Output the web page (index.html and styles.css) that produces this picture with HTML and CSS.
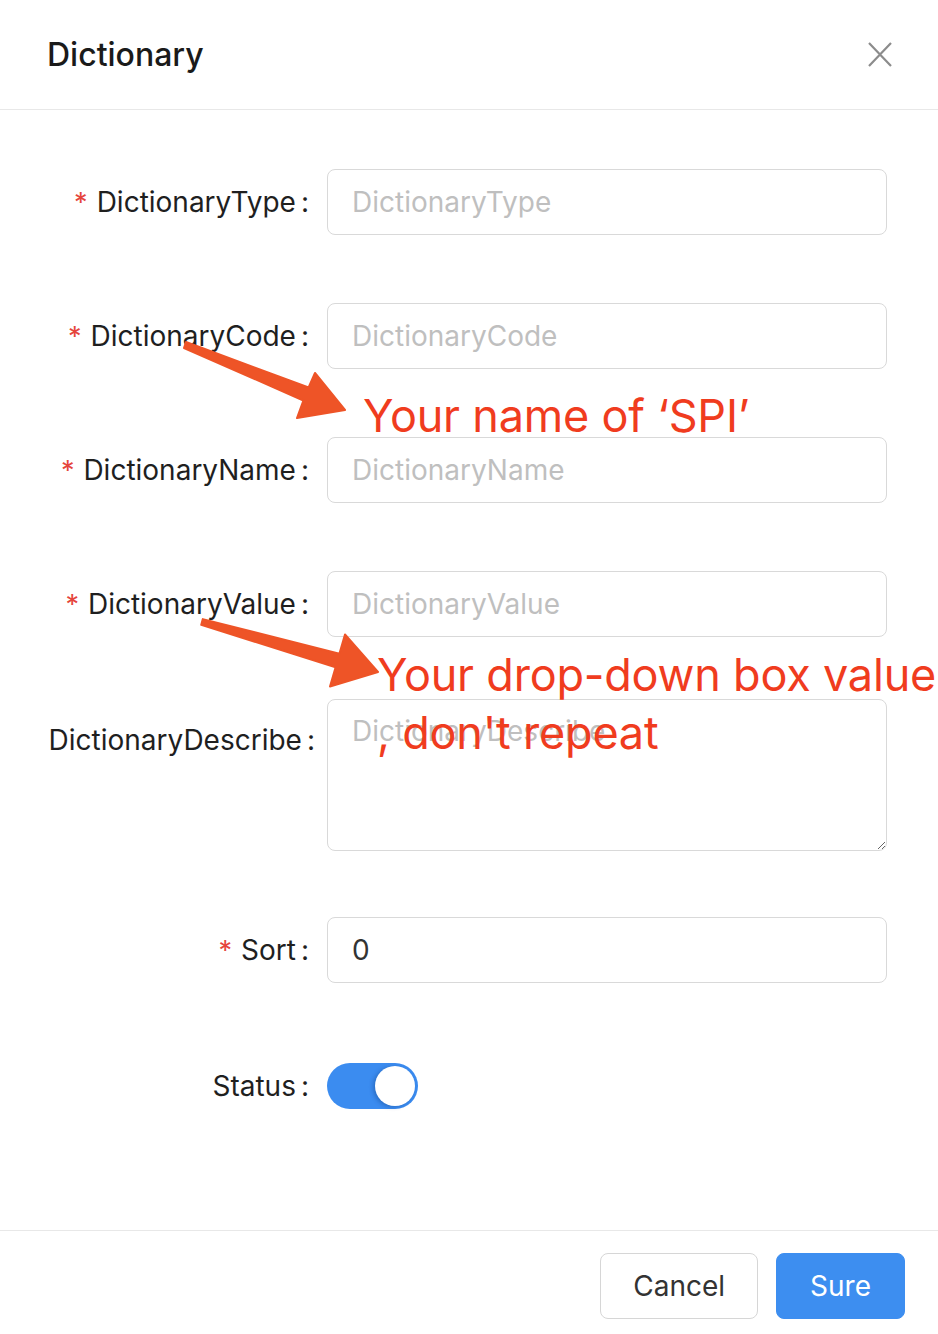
FILE: index.html
```html
<!DOCTYPE html>
<html lang="en">
<head>
<meta charset="utf-8">
<title>Dictionary</title>
<link rel="stylesheet" href="styles.css">
</head>
<body>
<div class="modal">
  <header class="modal-header">
    <h1 class="modal-title">Dictionary</h1>
    <button class="close" type="button" aria-label="Close">
      <svg width="24" height="25" viewBox="0 0 24 25"><path d="M1 1 L23 24 M23 1 L1 24" stroke="#8c8c8c" stroke-width="2.2" fill="none"/></svg>
    </button>
  </header>

  <main class="modal-body">
    <form class="form">
      <div class="row">
        <label class="label"><span class="req">*</span>DictionaryType<span class="colon">:</span></label>
        <div class="control"><input class="input" placeholder="DictionaryType"></div>
      </div>
      <div class="row">
        <label class="label"><span class="req">*</span>DictionaryCode<span class="colon">:</span></label>
        <div class="control"><input class="input" placeholder="DictionaryCode"></div>
      </div>
      <div class="row">
        <label class="label"><span class="req">*</span>DictionaryName<span class="colon">:</span></label>
        <div class="control"><input class="input" placeholder="DictionaryName"></div>
      </div>
      <div class="row row--tight">
        <label class="label"><span class="req">*</span>DictionaryValue<span class="colon">:</span></label>
        <div class="control"><input class="input" placeholder="DictionaryValue"></div>
      </div>
      <div class="row row--area">
        <label class="label label--top">DictionaryDescribe<span class="colon">:</span></label>
        <div class="control"><textarea class="textarea" placeholder="DictionaryDescribe"></textarea></div>
      </div>
      <div class="row row--sort">
        <label class="label"><span class="req">*</span>Sort<span class="colon">:</span></label>
        <div class="control"><input class="input" value="0"></div>
      </div>
      <div class="row row--last">
        <label class="label">Status<span class="colon">:</span></label>
        <div class="control control--switch"><span class="switch"><span class="knob"></span></span></div>
      </div>
    </form>
  </main>

  <footer class="modal-footer">
    <button class="btn" type="button">Cancel</button>
    <button class="btn btn--primary" type="button">Sure</button>
  </footer>

  <svg class="annotations" width="938" height="1334" viewBox="0 0 938 1334">
    <polygon class="arrow" points="186,342 308.6,387.5 315,373 345,410 297,418 303.4,400.5 184,348"/>
    <polygon class="arrow" points="202.8,619.1 339.4,653.8 345,634.5 378,672 330,686.5 335.6,667.2 201.2,624.9"/>
  </svg>
  <div class="note note--spi">Your name of ‘SPI’</div>
  <div class="note note--dropdown">Your drop-down box value<br>, don't repeat</div>
</div>
</body>
</html>
```

FILE: styles.css
```css
html, body {
  margin: 0;
  padding: 0;
  overflow: hidden;
  background: #ffffff;
}

body {
  font-family: Inter, "Noto Sans", "Liberation Sans", sans-serif;
  color: #1f1f1f;
}

.modal {
  position: relative;
  width: 938px;
  height: 1334px;
  display: flex;
  flex-direction: column;
  overflow: hidden;
  background: #fff;
}

.modal-header {
  height: 109px;
  border-bottom: 1px solid #e8e8e8;
  display: flex;
  align-items: center;
  justify-content: space-between;
  padding: 0 46px 0 47px;
}

.modal-title {
  margin: 0;
  font-size: 32px;
  font-weight: 500;
  color: #1a1a1a;
}

.close {
  border: 0;
  background: none;
  padding: 0;
  width: 24px;
  height: 25px;
  display: flex;
}

.modal-body {
  flex: 1;
}

.form {
  padding-top: 59px;
  display: flex;
  flex-direction: column;
}

.row {
  display: flex;
  margin-bottom: 68px;
}

.row--tight { margin-bottom: 62px; }
.row--area { margin-bottom: 66px; }
.row--sort { margin-bottom: 70px; }
.row--last { margin-bottom: 0; }

.label {
  box-sizing: border-box;
  width: 327px;
  min-width: 0;
  flex: none;
  display: flex;
  justify-content: flex-end;
  align-items: center;
  height: 66px;
  padding-right: 18px;
  font-size: 28px;
  white-space: nowrap;
  color: #1f1f1f;
}

.label--top {
  align-items: flex-start;
  padding-top: 24px;
  height: auto;
  padding-right: 12px;
}

.req {
  color: #e5453c;
  margin-right: 9px;
  font-size: 27px;
}

.colon {
  margin-left: 5px;
}

.control {
  width: 560px;
  flex: none;
}

.control--switch {
  height: 66px;
  display: flex;
  align-items: center;
}

.input {
  box-sizing: border-box;
  width: 100%;
  height: 66px;
  border: 1px solid #d9d9d9;
  border-radius: 8px;
  padding: 0 24px;
  font-family: inherit;
  font-size: 28px;
  color: #333;
  background: #fff;
  outline: none;
}

.textarea {
  box-sizing: border-box;
  display: block;
  width: 100%;
  height: 152px;
  border: 1px solid #d9d9d9;
  border-radius: 8px;
  padding: 10px 24px;
  font-family: inherit;
  font-size: 28px;
  line-height: 42px;
  color: #333;
  resize: vertical;
  outline: none;
}

.input::placeholder,
.textarea::placeholder {
  color: #bfbfbf;
}

.switch {
  position: relative;
  width: 91px;
  height: 46px;
  border-radius: 23px;
  background: #3b8cf0;
  display: flex;
  align-items: center;
  justify-content: flex-end;
  padding-right: 3px;
  box-sizing: border-box;
}

.knob {
  width: 40px;
  height: 40px;
  border-radius: 50%;
  background: #fff;
  box-shadow: -2px 1px 4px rgba(0, 40, 100, 0.3);
}

.modal-footer {
  border-top: 1px solid #e8e8e8;
  padding: 22px 33px 15px;
  display: flex;
  justify-content: flex-end;
  gap: 18px;
}

.btn {
  height: 66px;
  padding: 0 32px;
  border: 1px solid #d6d6d6;
  border-radius: 8px;
  background: #fff;
  font-family: inherit;
  font-size: 28px;
  color: #333;
}

.btn--primary {
  background: #3d8ef0;
  border-color: #3d8ef0;
  color: #fff;
  padding: 0 33px;
}

.annotations {
  position: absolute;
  left: 0;
  top: 0;
  pointer-events: none;
}

.arrow {
  fill: #ee5427;
  stroke: #ee5427;
  stroke-width: 2;
  stroke-linejoin: round;
}

.note {
  position: absolute;
  font-size: 45px;
  letter-spacing: -0.2px;
  color: #f03c1e;
  white-space: nowrap;
  pointer-events: none;
}

.note--spi {
  left: 363px;
  top: 393px;
  line-height: 46px;
}

.note--dropdown {
  left: 377px;
  top: 646px;
  line-height: 58px;
}
```
